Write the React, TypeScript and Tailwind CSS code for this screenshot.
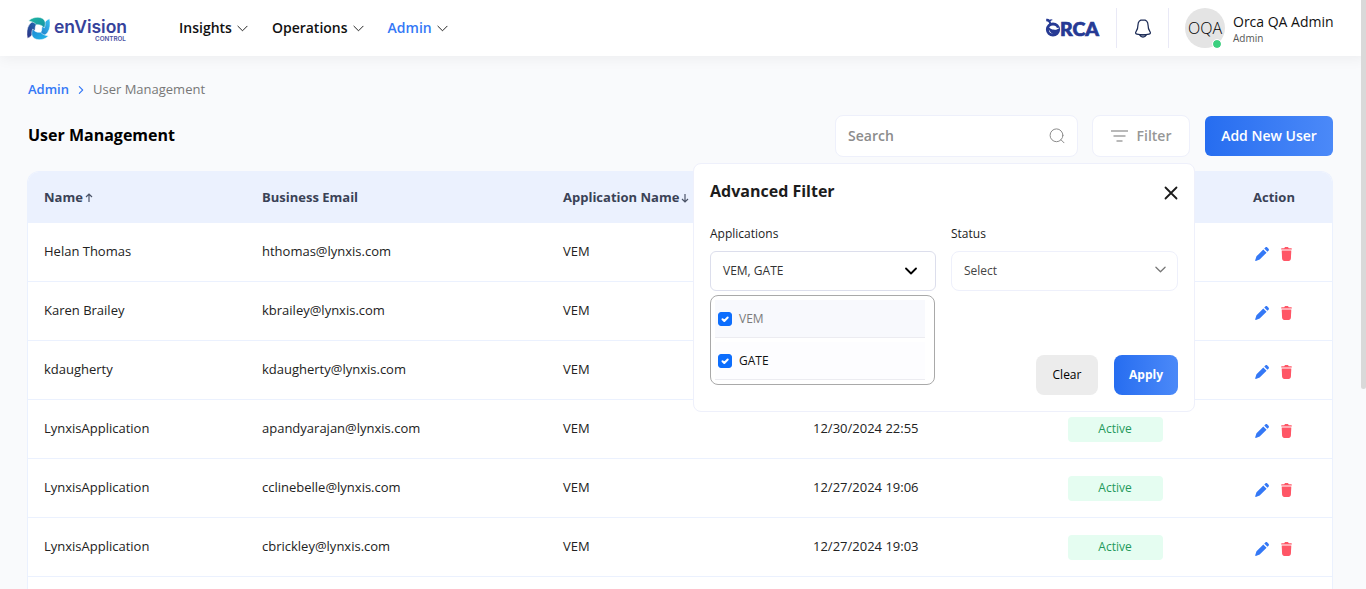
import { useState, type ReactNode } from "react";

type User = { name: string; email: string; app: string; lastLogin?: string };

const users: User[] = [
  { name: "Helan Thomas", email: "hthomas@lynxis.com", app: "VEM" },
  { name: "Karen Brailey", email: "kbrailey@lynxis.com", app: "VEM" },
  { name: "kdaugherty", email: "kdaugherty@lynxis.com", app: "VEM" },
  { name: "LynxisApplication", email: "apandyarajan@lynxis.com", app: "VEM", lastLogin: "12/30/2024 22:55" },
  { name: "LynxisApplication", email: "cclinebelle@lynxis.com", app: "VEM", lastLogin: "12/27/2024 19:06" },
  { name: "LynxisApplication", email: "cbrickley@lynxis.com", app: "VEM", lastLogin: "12/27/2024 19:03" },
];

function Chevron({ className, stroke = 1 }: { className: string; stroke?: number }) {
  return (
    <svg viewBox="0 0 12 12" fill="none" stroke="currentColor" strokeWidth={stroke} strokeLinecap="round" strokeLinejoin="round" className={className} aria-hidden="true">
      <path d="M1 3.500 6 8.500l5-5" />
    </svg>
  );
}

function EnvisionLogo() {
  return (
    <a href="#home" className="flex items-center gap-1" aria-label="enVision Control">
      <svg viewBox="0 0 22 22" className="ml-px size-[23px]" aria-hidden="true">
        <defs>
          <linearGradient id="teal" x1="0" y1="0" x2="1" y2="1">
            <stop offset="0" stopColor="#1fb8a0" />
            <stop offset="1" stopColor="#1291a6" />
          </linearGradient>
          <linearGradient id="sky" x1="0" y1="1" x2="1" y2="0">
            <stop offset="0" stopColor="#1b74c4" />
            <stop offset="1" stopColor="#38c4f4" />
          </linearGradient>
          <linearGradient id="navy" x1="0" y1="1" x2="1" y2="0">
            <stop offset="0" stopColor="#1f76b8" />
            <stop offset="1" stopColor="#2c2f84" />
          </linearGradient>
          <linearGradient id="cyan" x1="0" y1="0" x2="1" y2="1">
            <stop offset="0" stopColor="#22b9ea" />
            <stop offset="1" stopColor="#1b86d2" />
          </linearGradient>
        </defs>
        <g stroke="#fff" strokeWidth="0.500">
          <path fill="url(#sky)" d="M21.600 1.600c1 5.200.5 10-2 13.400-2.100 2.800-5.100 3.600-9 2.300 2.600-1.800 3.700-4 3.600-6.900C15.200 7.500 17.200 3.400 21.600 1.600Z" />
          <path fill="url(#navy)" transform="rotate(180 11 11)" d="M21.600 1.600c1 5.200.5 10-2 13.400-2.100 2.800-5.100 3.600-9 2.300 2.600-1.800 3.700-4 3.600-6.900C15.200 7.500 17.200 3.400 21.600 1.600Z" />
          <path fill="url(#teal)" d="M1.500 3.800C4.800.2 10.800-.6 14.500 1.300c3.200 1.700 3.700 5.100 2 9.300C15 8.300 12.400 7 9 7.400 7 5.200 4.500 4.300 1.500 3.800Z" />
          <path fill="url(#cyan)" transform="rotate(180 11 11)" d="M1.500 3.800C4.800.2 10.800-.6 14.500 1.300c3.200 1.700 3.700 5.100 2 9.300C15 8.300 12.400 7 9 7.400 7 5.200 4.500 4.300 1.500 3.800Z" />
        </g>
      </svg>
      <svg viewBox="0 0 76 26" className="h-[26px] w-[76px]" aria-hidden="true">
        <text x="0" y="18" fontFamily="Inter, sans-serif" fontWeight="600" fontSize="17.500" fill="#36429b">enVision</text>
        <text x="41" y="26" fontFamily="Inter, sans-serif" fontWeight="600" fontSize="6.300" fill="#4a51a3">CONTROL</text>
      </svg>
    </a>
  );
}

function OrcaLogo() {
  return (
    <svg viewBox="0 0 56 22" className="h-[22px] w-14" role="img" aria-label="Orca">
      <path d="M1.200 1.800c1.500-.4 2.700 0 3.400 1 1-.7 2.200-.7 3.300.2-1.300.2-2 .7-2.400 1.500l.7 1.500-2 1.300C4.300 5.300 3 4.500 1.200 4.300Z" fill="#263a94" />
      <circle cx="8" cy="12.500" r="5.600" fill="none" stroke="#263a94" strokeWidth="3" />
      <path d="M3 9.500c2.800 3.400 6.500 4 11 1.800l-.6 4.700C9.500 18.800 4.500 17 3 9.500Z" fill="#263a94" />
      <path d="M8.800 11.800c1.600.5 3.300.3 4.800-.7" stroke="#fff" strokeWidth="1.200" fill="none" />
      <text x="15" y="19" fontFamily="Lato, sans-serif" fontWeight="900" fontSize="19.500" fill="#263a94" stroke="#263a94" strokeWidth="0.700">RCA</text>
    </svg>
  );
}

function BellIcon() {
  return (
    <svg viewBox="0 0 18 20" fill="none" stroke="#1c2b56" strokeWidth="1.300" strokeLinejoin="round" strokeLinecap="round" className="h-[19px] w-[18px]" aria-hidden="true">
      <path d="M9 1C5.800 1 3.800 3.200 3.700 6.300c0 3.500-.4 4.600-1.900 6.700-1 1.400-.8 2.500.8 2.900 4.200 1 8.600 1 12.800 0 1.600-.4 1.800-1.500.8-2.900-1.500-2.100-1.900-3.200-1.900-6.700C14.200 3.200 12.200 1 9 1Z" />
      <path d="M5.500 16.800c.8 1.500 2 2.200 3.500 2.200s2.700-.7 3.500-2.200Z" fill="#b9bfce" />
    </svg>
  );
}

function PencilIcon() {
  return (
    <svg viewBox="0 0 15 15" fill="#3478f6" className="size-[14px]" aria-hidden="true">
      <path d="M8.900 2.600 12.400 6.100 5 13.300.9 14.900c-.4.100-.9-.3-.7-.7L1.600 10Z" />
      <path d="m9.900 1.700 1.200-1.200c.6-.6 1.500-.6 2.100 0l1.300 1.300c.6.600.6 1.500 0 2.100l-1.200 1.200Z" />
    </svg>
  );
}

function TrashIcon() {
  return (
    <svg viewBox="0 0 11 14" fill="#ff5666" className="h-[14px] w-[11px]" aria-hidden="true">
      <path d="M.7 1.200h2.500l.5-.8c.2-.3.400-.4.700-.4h2.200c.3 0 .5.100.7.400l.5.800h2.500c.3 0 .5.200.5.500V2.500H.2v-.8c0-.3.200-.5.500-.5Z" />
      <path d="M.7 3.500h9.600l-.4 8.300c-.1 1.200-1 2.200-2.200 2.200H3.300c-1.200 0-2.100-1-2.200-2.200Z" />
    </svg>
  );
}

function SortArrow({ down = false }: { down?: boolean }) {
  return (
    <svg viewBox="0 0 8 10" fill="none" stroke="#4b5468" strokeWidth="1.200" className="h-[10px] w-2" aria-hidden="true">
      {down ? <path d="M4 1v8M1 6l3 3 3-3" /> : <path d="M4 9V1M1 4l3-3 3 3" />}
    </svg>
  );
}

function NavItem({ label, active = false }: { label: string; active?: boolean }) {
  return (
    <button type="button" className="flex items-center gap-[5px]">
      <span className={active ? "text-[#3478f6]" : "text-[#111111]"}>{label}</span>
      <Chevron className="size-[11px] text-[#111111]" />
    </button>
  );
}

function Header() {
  return (
    <header className="relative z-10 flex h-14 shrink-0 items-center bg-white pr-[29px] pl-[26px] shadow-[0_2px_14px_rgba(0,0,0,0.06)]">
      <EnvisionLogo />
      <nav className="ml-[49px] flex gap-6 text-sm font-semibold">
        <NavItem label="Insights" />
        <NavItem label="Operations" />
        <NavItem label="Admin" active />
      </nav>
      <div className="ml-auto flex items-center">
        <OrcaLogo />
        <div className="ml-[15px] flex h-10 w-[53px] items-center justify-center border-x border-[#e9e9f6]">
          <button type="button" aria-label="Notifications">
            <BellIcon />
          </button>
        </div>
        <div className="ml-4 flex items-center gap-2">
          <div className="relative flex size-10 items-center justify-center rounded-full bg-[#e4e4e4] text-base font-light text-black">
            OQA
            <span className="absolute right-1 bottom-0 size-2 rounded-full bg-[#3bd07f] outline outline-white" />
          </div>
          <div className="min-w-[104px]">
            <div className="text-sm leading-5 font-medium text-[#111111]">Orca QA Admin</div>
            <div className="text-[10px] leading-3 text-[#555555]">Admin</div>
          </div>
        </div>
      </div>
    </header>
  );
}

function AppOption({ label, className, checked, onChange }: { label: string; className: string; checked: boolean; onChange: () => void }) {
  return (
    <label className={"flex h-[38px] items-center gap-[7px] border-b border-[#ececf1] px-[3px] " + className}>
      <span className="relative flex size-[14px]">
        <input type="checkbox" checked={checked} onChange={onChange} className="size-[14px] appearance-none rounded-[3px] border border-[#0d6efd] bg-white checked:bg-[#0d6efd]" />
        <svg viewBox="0 0 14 14" fill="none" stroke="#fff" strokeWidth="2" strokeLinecap="round" strokeLinejoin="round" className="pointer-events-none absolute inset-0" aria-hidden="true">
          <path d="m4.500 7.200 1.800 1.800 3.400-3.500" />
        </svg>
      </span>
      {label}
    </label>
  );
}

function FilterPanel() {
  const [selected, setSelected] = useState<string[]>(["VEM", "GATE"]);
  const toggle = (app: string) =>
    setSelected((list) => (list.includes(app) ? list.filter((a) => a !== app) : [...list, app]));

  return (
    <section aria-label="Advanced Filter" className="absolute top-full -right-[5px] z-20 mt-[6px] w-[502px] rounded-lg border border-[#eef0fb] bg-white p-4 pt-[15px]">
      <div className="flex items-center justify-between">
        <h2 className="text-base leading-6 font-bold text-[#1c1c1c]">Advanced Filter</h2>
        <button type="button" aria-label="Close" className="mt-1">
          <svg viewBox="0 0 14 14" className="size-[14px]" stroke="#1a1a1a" strokeWidth="1.800" strokeLinecap="round" aria-hidden="true">
            <path d="m1.500 1.500 11 11m0-11-11 11" />
          </svg>
        </button>
      </div>
      <div className="mt-[21px] grid grid-cols-[226px_1fr] gap-x-[15px] text-xs">
        <div>
          <span id="apps-label" className="block leading-5 font-medium text-[#1c1c1c]">Applications</span>
          <div className="relative mt-[7px]">
            <button type="button" aria-labelledby="apps-label" className="flex h-10 w-full items-center justify-between rounded-md border border-[#dcdeec] bg-white pr-[18px] pl-3 text-[#333333]">
              {selected.join(", ")}
              <Chevron className="size-3 text-black" stroke={1.8} />
            </button>
            <div className="absolute top-full left-0 mt-1 flex w-[225px] flex-col gap-1 rounded-lg border border-[#a9a9a9] bg-white py-1 pr-[9px] pl-1">
              <AppOption label="VEM" className="bg-[#f8f9fd] text-[#7b7b7b]" checked={selected.includes("VEM")} onChange={() => toggle("VEM")} />
              <AppOption label="GATE" className="bg-[#fdfdff] font-medium text-[#111111]" checked={selected.includes("GATE")} onChange={() => toggle("GATE")} />
            </div>
          </div>
        </div>
        <div>
          <label htmlFor="status" className="block leading-5 font-medium text-[#1c1c1c]">Status</label>
          <div className="relative mt-[7px]">
            <select id="status" className="h-10 w-full appearance-none rounded-lg border border-[#eef0fb] bg-white px-3 text-[#444444]">
              <option>Select</option>
              <option>Active</option>
              <option>Inactive</option>
            </select>
            <Chevron className="pointer-events-none absolute top-[13px] right-3 size-[11px] text-[#777777]" stroke={1.4} />
          </div>
        </div>
      </div>
      <div className="mt-16 flex justify-end gap-4 text-xs">
        <button type="button" className="h-10 w-[62px] rounded-lg bg-[#ececec] font-medium text-black">Clear</button>
        <button type="button" className="h-10 w-16 rounded-lg bg-linear-to-r from-[#266df0] to-[#4b89f8] font-bold text-white">Apply</button>
      </div>
    </section>
  );
}

function Toolbar() {
  return (
    <div className="mt-4 flex items-center">
      <h1 className="pb-[2px] pl-px text-base font-bold text-black">User Management</h1>
      <div className="ml-auto flex h-[42px] w-[243px] items-center rounded-lg border border-[#eef0fb] bg-white pr-3 pl-3">
        <input type="search" aria-label="Search" placeholder="Search" className="min-w-0 flex-1 bg-transparent text-sm font-semibold text-[#333333] outline-none placeholder:text-[#8c8c8c]" />
        <svg viewBox="0 0 16 16" fill="none" stroke="#8c8c8c" strokeWidth="1" strokeLinecap="round" className="size-4" aria-hidden="true">
          <circle cx="7.500" cy="7.300" r="6.400" />
          <path d="m12 11.800 3 3" />
        </svg>
      </div>
      <div className="relative ml-[14px]">
        <button type="button" className="flex h-[42px] w-[98px] items-center justify-center gap-[9px] rounded-lg border border-[#eef0fb] bg-white text-sm font-semibold text-[#979797]">
          <svg viewBox="0 0 17 12" className="h-3 w-[17px]" stroke="#a3a3a3" strokeWidth="1.500" aria-hidden="true">
            <path d="M0 1h17M2.500 6h12M5.500 11h6" />
          </svg>
          Filter
        </button>
        <FilterPanel />
      </div>
      <button type="button" className="ml-[15px] h-10 w-32 rounded-md bg-linear-to-r from-[#266df0] to-[#4b89f8] text-sm font-semibold text-white">
        Add New User
      </button>
    </div>
  );
}

function Th({ children, label, center = false }: { children?: ReactNode; label?: string; center?: boolean }) {
  return (
    <th scope="col" aria-label={label} className={center ? "text-center font-bold" : "px-4 text-left font-bold"}>
      <span className="inline-flex items-center gap-[2px] whitespace-nowrap">{children}</span>
    </th>
  );
}

function UserTable() {
  const cell = "border-b border-[#ebf1fe] px-4";
  return (
    <div className="mt-[14px] overflow-hidden rounded-t-xl border-x border-t border-[#ebf1fe] bg-white">
      <table className="w-full table-fixed border-separate border-spacing-0 text-[13px] text-[#222222]">
        <colgroup>
          <col className="w-[218px]" />
          <col className="w-[301px]" />
          <col className="w-[250px]" />
          <col className="w-[218px]" />
          <col className="w-[200px]" />
          <col className="w-[118px]" />
        </colgroup>
        <thead>
          <tr className="h-[51px] bg-[#ebf1fe] text-[#3a4256]">
            <Th>Name <SortArrow /></Th>
            <Th>Business Email</Th>
            <Th>Application Name <SortArrow down /></Th>
            <Th label="Last Login" />
            <Th label="Status" center />
            <Th center>Action</Th>
          </tr>
        </thead>
        <tbody>
          {users.map((user) => (
            <tr key={user.email} className="h-[59px]">
              <td className={cell}>{user.name}</td>
              <td className={cell}>{user.email}</td>
              <td className={cell}>{user.app}</td>
              <td className={cell}>{user.lastLogin}</td>
              <td className={cell}>
                <span className="mx-auto block w-[95px] rounded bg-[#e5fdf1] pb-px text-center text-xs leading-6 font-medium text-[#239a5b]">Active</span>
              </td>
              <td className={cell}>
                <div className="flex justify-center gap-3 pt-1 pr-[2px]">
                  <button type="button" aria-label={"Edit " + user.email}><PencilIcon /></button>
                  <button type="button" aria-label={"Delete " + user.email}><TrashIcon /></button>
                </div>
              </td>
            </tr>
          ))}
          <tr className="h-[59px]">
            <td colSpan={6} />
          </tr>
        </tbody>
      </table>
    </div>
  );
}

export default function App() {
  return (
    <div className="relative flex h-screen flex-col overflow-hidden bg-[#f9fafc] font-['Open_Sans',sans-serif]">
      <Header />
      <main className="pr-[33px] pl-[27px]">
        <nav aria-label="Breadcrumb" className="mt-6 flex items-center gap-2 pl-px text-[13px] leading-[19px]">
          <a href="#admin" className="font-semibold text-[#3478f6]">Admin</a>
          <Chevron className="size-2 -rotate-90 text-[#3478f6]" stroke={1.6} />
          <span className="text-[#777777]">User Management</span>
        </nav>
        <Toolbar />
        <UserTable />
      </main>
      <div aria-hidden="true" className="absolute top-0 right-0 z-30 h-[66%] w-[5px] rounded-b bg-[#d9d9d9]" />
    </div>
  );
}
